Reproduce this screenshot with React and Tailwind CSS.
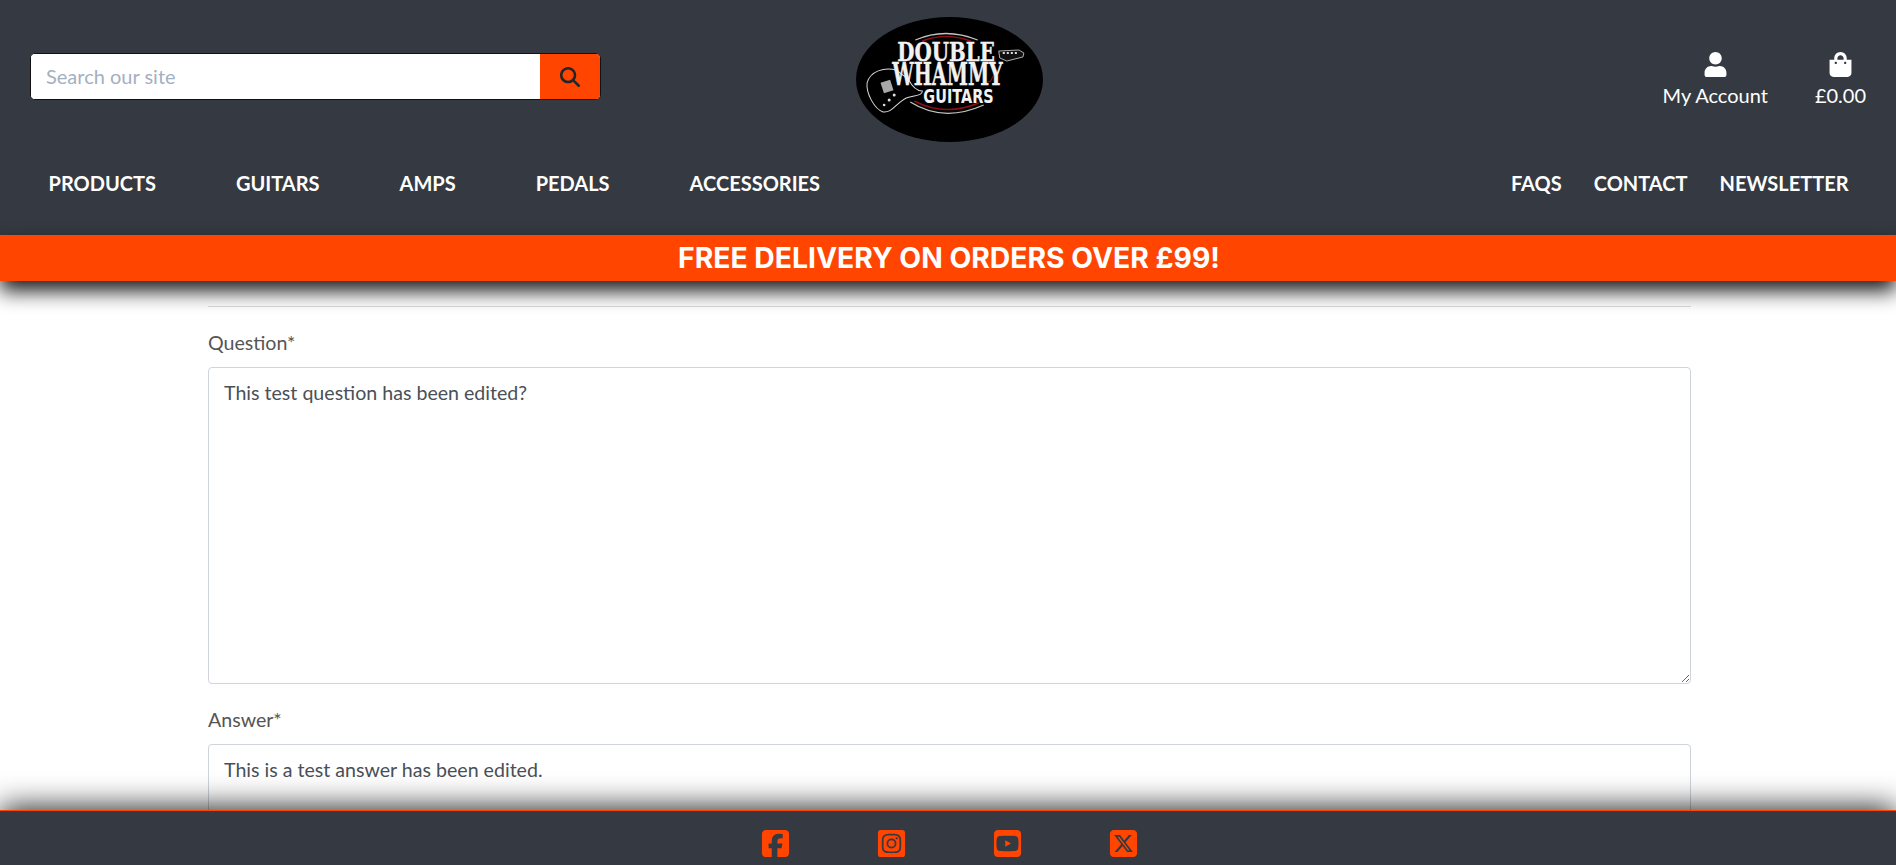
import React from "react";
import { FaUser, FaShoppingBag, FaInstagramSquare } from "react-icons/fa";
import { FaMagnifyingGlass, FaSquareFacebook, FaSquareYoutube, FaSquareXTwitter } from "react-icons/fa6";

function Logo() {
  return (
    <svg width="187" height="125" viewBox="0 0 186 125" preserveAspectRatio="none" className="block">
      <ellipse cx="93" cy="62.5" rx="93" ry="62.5" fill="#000" />
      <path d="M59 23 Q89 10 121 23" fill="none" stroke="#c4c4c4" strokeWidth="1.3" />
      <path d="M66 24 Q89 15 114 24" fill="none" stroke="#8a0f14" strokeWidth="1.5" />
      <path d="M58 84 Q88 100 122 86" fill="none" stroke="#8a0f14" strokeWidth="1.5" />
      <path d="M54 85 Q87 106 127 88" fill="none" stroke="#c4c4c4" strokeWidth="1.3" />
      <path d="M128 66 L134 64 L138 56" fill="none" stroke="#8a0f14" strokeWidth="1" />
      <path d="M40 53 C28 50 14 54 11 66 C10 76 18 92 27 95 C36 96 40 86 50 81 C58 78 66 79 66 74 C60 74 56 70 52 62 Z" fill="#000" stroke="#d8d8d8" strokeWidth="1" />
      <path d="M167 36 L162 33 L142 34 L143 41 L150 44 L166 40 Z" fill="#111" stroke="#d8d8d8" strokeWidth="0.8" />
      <path d="M146 36 h15" stroke="#e0e0e0" strokeWidth="2" strokeDasharray="2 2" />
      <rect x="26" y="64" width="10" height="11" fill="#a8a8a8" transform="rotate(-18 31 70)" />
      <circle cx="38" cy="78" r="1.5" fill="#ddd" /><circle cx="33" cy="83" r="1.5" fill="#ddd" /><circle cx="28" cy="88" r="1.3" fill="#ddd" />
      <text x="41" y="44" textLength="97" lengthAdjust="spacingAndGlyphs" fontFamily="'DejaVu Serif', serif" fontWeight="700" fontSize="26" fill="#f2f2f2" stroke="#f2f2f2" strokeWidth="0.4">DOUBLE</text>
      <text x="36" y="68" textLength="110" lengthAdjust="spacingAndGlyphs" fontFamily="'DejaVu Serif', serif" fontWeight="700" fontSize="31" fill="#f2f2f2" stroke="#f2f2f2" strokeWidth="0.4">WHAMMY</text>
      <text x="67" y="86" textLength="70" lengthAdjust="spacingAndGlyphs" fontFamily="'DejaVu Sans', sans-serif" fontWeight="700" fontSize="19" fill="#f2f2f2">GUITARS</text>
    </svg>
  );
}

export default function App() {
  return (
    <div className="h-screen flex flex-col overflow-hidden bg-white font-['Lato','Liberation_Sans',sans-serif]">
      <header className="relative z-10 shrink-0">
        <div className="bg-[#353a42] h-[235px] flex flex-col">
          <div className="h-[157px] flex items-start justify-between px-[30px]">
            <form className="mt-[53px] w-[571px] h-[47px] flex rounded-[5px] border border-[#111] overflow-hidden bg-white">
              <input readOnly placeholder="Search our site" className="flex-1 min-w-0 px-[15px] pb-[2px] text-[20px] bg-white outline-none placeholder:text-[#a3b0bf]" />
              <button type="button" className="w-[60px] bg-[#ff4500] flex items-center justify-center text-[#22262b]"><FaMagnifyingGlass size={20} /></button>
            </form>
            <div className="absolute left-[856px] top-[17px]"><Logo /></div>
            <div className="flex text-white text-[20px] gap-[47px] mt-[52px]">
              <a className="flex flex-col items-center leading-[24px]"><FaUser size={25} /><span className="mt-[6px]">My Account</span></a>
              <a className="flex flex-col items-center leading-[24px]"><FaShoppingBag size={25} /><span className="mt-[6px]">£0.00</span></a>
            </div>
          </div>
          <nav className="flex justify-between pl-[48.5px] pr-[47.5px] text-white font-bold text-[20px] leading-[24px] mt-[14px]">
            <div className="flex gap-[80px]">
              <a>PRODUCTS</a><a>GUITARS</a><a>AMPS</a><a>PEDALS</a><a>ACCESSORIES</a>
            </div>
            <div className="flex gap-[32px]">
              <a>FAQS</a><a>CONTACT</a><a>NEWSLETTER</a>
            </div>
          </nav>
        </div>
        <div className="h-[46px] bg-[#ff4500] flex items-center justify-center pl-[2px] text-white font-['Inter',sans-serif] font-bold text-[28.3px] shadow-[0_10px_20px_rgba(0,0,0,0.9)]">
          FREE DELIVERY ON ORDERS OVER £99!
        </div>
      </header>
      <main className="flex-1 min-h-0 overflow-hidden pl-[208px] pr-[205px] pt-[25px] text-[19.6px] text-[#555]">
        <div className="border-t border-[#dcdcdc] pt-[24px]">
          <label className="block leading-[24px] mb-[12px]">Question*</label>
          <textarea readOnly defaultValue="This test question has been edited?" className="block w-full h-[317px] rounded border border-[#ced4da] px-[15px] py-[11px] leading-[27px] text-[#495057] outline-none" />
          <label className="block leading-[24px] mt-[24px] mb-[12px]">Answer*</label>
          <textarea readOnly defaultValue="This is a test answer has been edited." className="block w-full h-[317px] rounded border border-[#ced4da] px-[15px] py-[11px] leading-[27px] text-[#495057] outline-none" />
        </div>
      </main>
      <footer className="relative z-10 shrink-0 h-[55px] bg-[#353a42] border-t border-[#ff4500] shadow-[0_-3px_30px_rgba(0,0,0,0.85)] flex justify-center gap-[85px] pl-[2px] pt-[17px] text-[#ff4500]">
        <FaSquareFacebook size={31} />
        <FaInstagramSquare size={31} />
        <FaSquareYoutube size={31} />
        <FaSquareXTwitter size={31} />
      </footer>
    </div>
  );
}
